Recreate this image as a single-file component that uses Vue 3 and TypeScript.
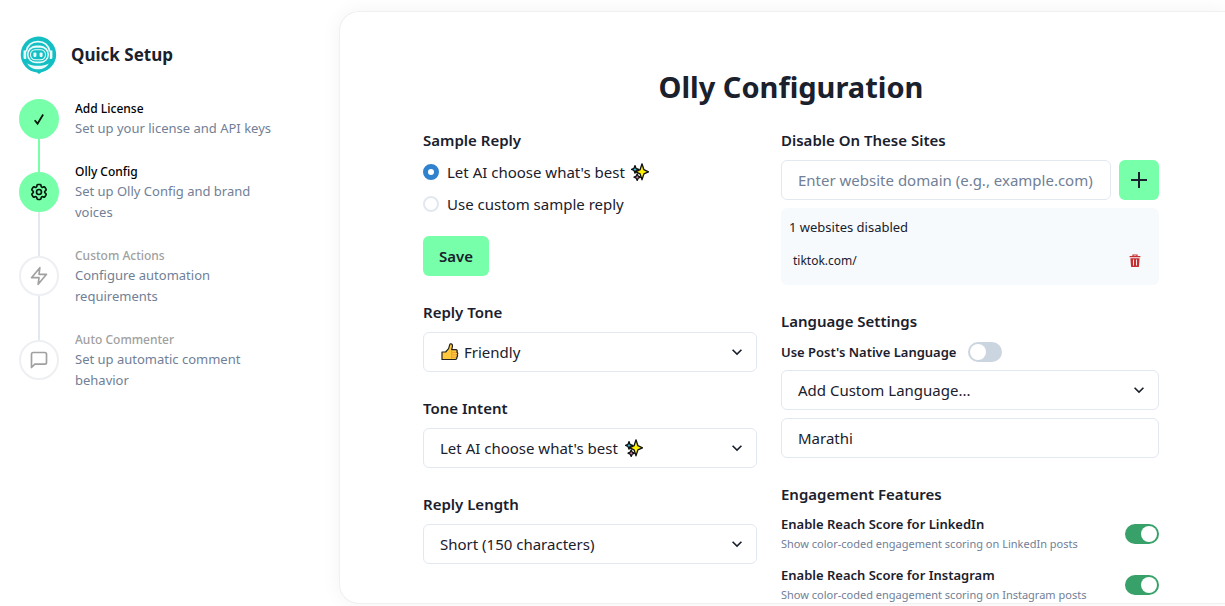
<script setup lang="ts">
import { ref } from 'vue'

interface Step {
  title: string
  text: string
  state: 'done' | 'active' | 'todo'
  icon: 'check' | 'gear' | 'bolt' | 'chat'
}

interface Feature {
  id: string
  title: string
  text: string
  on: boolean
}

const steps: Step[] = [
  { title: 'Add License', text: 'Set up your license and API keys', state: 'done', icon: 'check' },
  { title: 'Olly Config', text: 'Set up Olly Config and brand voices', state: 'active', icon: 'gear' },
  { title: 'Custom Actions', text: 'Configure automation requirements', state: 'todo', icon: 'bolt' },
  { title: 'Auto Commenter', text: 'Set up automatic comment behavior', state: 'todo', icon: 'chat' },
]

const replyMode = ref('ai')
const domain = ref('')
const sites = ref<string[]>(['tiktok.com/'])
const nativeLanguage = ref(false)
const customLanguage = ref('Marathi')
const features = ref<Feature[]>([
  { id: 'linkedin', title: 'Enable Reach Score for LinkedIn', text: 'Show color-coded engagement scoring on LinkedIn posts', on: true },
  { id: 'instagram', title: 'Enable Reach Score for Instagram', text: 'Show color-coded engagement scoring on Instagram posts', on: true },
])

function addSite(): void {
  const value = domain.value.trim()
  if (value) sites.value.push(value)
  domain.value = ''
}

function removeSite(index: number): void {
  sites.value.splice(index, 1)
}
</script>

<template>
  <div class="page">
    <svg width="0" height="0" class="defs" aria-hidden="true">
      <symbol id="sparkles" viewBox="0 0 18 18">
        <g stroke="#111" stroke-width="1.3" stroke-linejoin="round">
          <path d="M4 2.6 5 5.3 7.6 6.4 5 7.5 4 10.2 3 7.5.6 6.4 3 5.3Z" fill="#3fc1d6" />
          <path d="M6.2 10.800 7.200 13.200 9.600 14.200 7.200 15.200 6.200 17.400 5.200 15.200 3 14.200 5.200 13.200Z" fill="#e78bc0" />
          <path d="M11 .8 12.900 6.700 17.500 8.800 12.900 10.900 11 16.800 9.100 10.900 4.800 8.800 9.100 6.700Z" fill="#fff100" />
        </g>
      </symbol>
      <symbol id="thumb" viewBox="0 0 18 18">
        <path d="M1 9h3.6L7.6 5.6 8.8 1.4c.3-.9 2.6-.7 2.7 1.2 0 1.6-.5 2.9-.9 4.1h4.2c1.6 0 1.9 1.7.9 2.4 1.3.4 1.4 2.1.3 2.6 1 .7.7 2-.3 2.3.6.9 0 2.5-1.5 2.5H1Z" fill="#ffc83d" stroke="#222" stroke-width="1.2" stroke-linejoin="round" />
        <path d="M10.6 7.2v8.4M11 9.4h4.4M11 11.8h4.6M11 14.2h4" fill="none" stroke="#e8912d" stroke-width=".7" />
      </symbol>
      <symbol id="chevron" viewBox="0 0 24 24">
        <path d="M16.59 8.59 12 13.17 7.41 8.59 6 10l6 6 6-6z" fill="currentColor" />
      </symbol>
    </svg>

    <aside class="sidebar">
      <header class="brand">
        <svg class="logo" viewBox="0 0 38 38" aria-hidden="true">
          <path d="M19 .5a18 18 0 0 1 3.4 35.7L20 38l-2-1.6A18 18 0 0 1 19 .5Z" fill="#14bfc4" />
          <path d="M7.2 15.5C8.6 9 13.3 5.6 19 5.6S29.400 9 30.800 15.500" fill="none" stroke="#e9fbfa" stroke-width="1.800" />
          <path d="M4.600 14.500h2.600v8.500H6a1.500 1.500 0 0 1-1.500-1.500ZM30.800 14.500h2.600v7a1.500 1.500 0 0 1-1.500 1.500h-1.100Z" fill="#e9fbfa" />
          <rect x="8" y="9.600" width="22" height="17.600" rx="8.800" fill="#e9fbfa" />
          <rect x="9.500" y="11.800" width="19" height="13.800" rx="6.900" fill="#14bfc4" />
          <rect x="11" y="13.200" width="16" height="11" rx="5.200" fill="#e9fbfa" />
          <rect x="12" y="14.200" width="14" height="9" rx="4.200" fill="#14bfc4" />
          <rect x="14.400" y="16.400" width="3" height="4.600" rx="1.200" fill="#e9fbfa" />
          <rect x="20.600" y="16.400" width="3" height="4.600" rx="1.200" fill="#e9fbfa" />
          <path d="M8.200 27.400c2.600 1.700 6.400 2.400 10.800 2.400s8.200-.7 10.800-2.400C27.800 31.200 23.800 33.200 19 33.200S10.200 31.200 8.200 27.400Z" fill="#e9fbfa" />
        </svg>
        <h2>Quick Setup</h2>
      </header>

      <ol class="steps">
        <li v-for="step in steps" :key="step.title" class="step" :class="step.state">
          <span class="dot">
            <svg v-if="step.icon === 'check'" class="check" viewBox="0 0 20 20" aria-hidden="true">
              <path d="M5.200 11.400 8.400 15.200 14.600 5" fill="none" stroke="currentColor" stroke-width="2" />
            </svg>
            <svg v-else viewBox="0 0 24 24" fill="none" stroke="currentColor" stroke-width="2" stroke-linecap="round" stroke-linejoin="round" aria-hidden="true">
              <template v-if="step.icon === 'gear'">
                <path d="M9.594 3.940c.09-.542.560-.940 1.110-.940h2.593c.550 0 1.020.398 1.110.940l.213 1.281c.063.374.313.686.645.870.074.040.147.083.220.127.325.196.720.257 1.075.124l1.217-.456a1.125 1.125 0 0 1 1.370.490l1.296 2.247a1.125 1.125 0 0 1-.260 1.431l-1.003.827c-.293.241-.438.613-.430.992a7.723 7.723 0 0 1 0 .255c-.008.378.137.750.430.991l1.004.827c.424.350.534.955.260 1.430l-1.298 2.247a1.125 1.125 0 0 1-1.369.491l-1.217-.456c-.355-.133-.750-.072-1.076.124a6.470 6.470 0 0 1-.220.128c-.331.183-.581.495-.644.869l-.213 1.281c-.090.543-.560.940-1.110.940h-2.594c-.550 0-1.019-.398-1.110-.940l-.213-1.281c-.062-.374-.312-.686-.644-.870a6.520 6.520 0 0 1-.220-.127c-.325-.196-.720-.257-1.076-.124l-1.217.456a1.125 1.125 0 0 1-1.369-.490l-1.297-2.247a1.125 1.125 0 0 1 .260-1.431l1.004-.827c.292-.240.437-.613.430-.991a6.932 6.932 0 0 1 0-.255c.007-.380-.138-.751-.430-.992l-1.004-.827a1.125 1.125 0 0 1-.260-1.430l1.297-2.247a1.125 1.125 0 0 1 1.370-.491l1.216.456c.356.133.751.072 1.076-.124.072-.044.146-.086.220-.128.332-.183.582-.495.644-.869z" />
                <circle cx="12" cy="12" r="3" />
              </template>
              <path v-else-if="step.icon === 'bolt'" d="M13 2 3 14h9l-1 8 10-12h-9z" />
              <path v-else d="M21 15a2 2 0 0 1-2 2H7l-4 4V5a2 2 0 0 1 2-2h14a2 2 0 0 1 2 2z" />
            </svg>
          </span>
          <div class="step-body">
            <h3>{{ step.title }}</h3>
            <p>{{ step.text }}</p>
          </div>
        </li>
      </ol>
    </aside>

    <main class="panel">
      <h1>Olly Configuration</h1>
      <div class="columns">
        <div class="column">
          <section role="radiogroup" aria-labelledby="sample-title">
            <h2 id="sample-title" class="label">Sample Reply</h2>
            <div class="radios">
              <label class="radio">
                <input v-model="replyMode" type="radio" name="reply" value="ai" />
                <span>Let AI choose what's best</span>
                <svg class="emoji" aria-hidden="true"><use href="#sparkles" /></svg>
              </label>
              <label class="radio">
                <input v-model="replyMode" type="radio" name="reply" value="custom" />
                <span>Use custom sample reply</span>
              </label>
            </div>
            <button type="button" class="save">Save</button>
          </section>

          <section>
            <label class="label" for="tone">Reply Tone</label>
            <div class="select with-icon">
              <select id="tone"><option>Friendly</option></select>
              <svg class="emoji leading" aria-hidden="true"><use href="#thumb" /></svg>
              <svg class="chevron" aria-hidden="true"><use href="#chevron" /></svg>
            </div>
          </section>

          <section>
            <label class="label" for="intent">Tone Intent</label>
            <div class="select">
              <select id="intent"><option>Let AI choose what's best</option></select>
              <svg class="emoji trailing" aria-hidden="true"><use href="#sparkles" /></svg>
              <svg class="chevron" aria-hidden="true"><use href="#chevron" /></svg>
            </div>
          </section>

          <section>
            <label class="label" for="length">Reply Length</label>
            <div class="select">
              <select id="length"><option>Short (150 characters)</option></select>
              <svg class="chevron" aria-hidden="true"><use href="#chevron" /></svg>
            </div>
          </section>
        </div>

        <div class="column">
          <section>
            <label class="label" for="domain">Disable On These Sites</label>
            <form class="add" @submit.prevent="addSite">
              <input id="domain" v-model="domain" class="field" type="text" placeholder="Enter website domain (e.g., example.com)" />
              <button type="submit" class="plus" aria-label="Add website">
                <svg viewBox="0 0 20 20" aria-hidden="true">
                  <path d="M10 2v16M2 10h16" fill="none" stroke="currentColor" stroke-width="2" />
                </svg>
              </button>
            </form>
            <div class="sites">
              <p>{{ sites.length }} websites disabled</p>
              <ul>
                <li v-for="(site, index) in sites" :key="site">
                  <span>{{ site }}</span>
                  <button type="button" :aria-label="`Remove ${site}`" @click="removeSite(index)">
                    <svg viewBox="0 0 12 14" aria-hidden="true">
                      <path d="M.6 2.600h10.800M4 2.400V1h4v1.400" fill="none" stroke="currentColor" stroke-width="1.200" />
                      <path fill-rule="evenodd" d="M1.400 4.200h9.200l-.6 8a1 1 0 0 1-1 .9H3a1 1 0 0 1-1-.9ZM4 5.600v6h.9v-6ZM7.100 5.600v6H8v-6Z" fill="currentColor" />
                    </svg>
                  </button>
                </li>
              </ul>
            </div>
          </section>

          <section>
            <h2 class="label">Language Settings</h2>
            <div class="native">
              <label for="native" class="name">Use Post's Native Language</label>
              <input id="native" v-model="nativeLanguage" class="switch" type="checkbox" role="switch" />
            </div>
            <div class="select">
              <select aria-label="Custom language"><option>Add Custom Language...</option></select>
              <svg class="chevron" aria-hidden="true"><use href="#chevron" /></svg>
            </div>
            <input v-model="customLanguage" class="field language" type="text" aria-label="Language name" />
          </section>

          <section>
            <h2 class="label">Engagement Features</h2>
            <div class="features">
              <div v-for="feature in features" :key="feature.id" class="feature">
                <div>
                  <label :for="feature.id" class="name">{{ feature.title }}</label>
                  <p>{{ feature.text }}</p>
                </div>
                <input :id="feature.id" v-model="feature.on" class="switch" type="checkbox" role="switch" />
              </div>
            </div>
          </section>
        </div>
      </div>
    </main>
  </div>
</template>

<style>
body {
  margin: 0;
  background: #fff;
}
</style>

<style scoped>
.page {
  --green: #78ffaa;
  --line: #e2e8f0;
  --muted: #718096;
  box-sizing: border-box;
  display: flex;
  height: 100vh;
  padding: 11px 0 2px;
  overflow: hidden;
  font-family: "Noto Sans", "Open Sans", sans-serif;
  font-size: 15px;
  line-height: 24px;
  color: #1a202c;
}

.page * {
  box-sizing: border-box;
}

.defs {
  position: absolute;
}

h1,
h2,
h3,
p,
ol,
ul {
  margin: 0;
  padding: 0;
}

ol,
ul {
  list-style: none;
}

button,
input,
select {
  margin: 0;
  font: inherit;
  color: inherit;
}

button {
  border: 0;
  cursor: pointer;
}

svg {
  display: block;
  flex-shrink: 0;
}

.sidebar {
  flex: 0 0 339px;
  padding: 25px 60px 0 19px;
}

.brand {
  display: flex;
  align-items: center;
  gap: 14px;
  margin-bottom: 24px;
}

.logo {
  width: 38px;
  height: 38px;
}

.brand h2 {
  font-size: 17px;
  font-weight: 700;
}

.steps {
  display: flex;
  flex-direction: column;
  gap: 22px;
}

.step {
  position: relative;
  display: flex;
  align-items: center;
  gap: 16px;
}

.step:not(:last-child)::before {
  content: "";
  position: absolute;
  top: 50%;
  left: 19px;
  width: 2px;
  height: calc(100% + 22px);
  background: var(--line);
}

.step.done::before {
  background: var(--green);
}

.dot {
  position: relative;
  z-index: 1;
  display: grid;
  place-items: center;
  flex: 0 0 40px;
  height: 40px;
  border: 2px solid #edeff2;
  border-radius: 50%;
  background: #fff;
  color: #a0a0a0;
}

.done .dot,
.active .dot {
  border-color: var(--green);
  background: var(--green);
  color: #06170d;
}

.dot svg {
  width: 20px;
  height: 20px;
}

.dot .check {
  width: 18px;
  height: 18px;
}

.step-body {
  padding-top: 2px;
}

.step h3 {
  font-size: 12px;
  line-height: 18px;
  font-weight: 500;
  color: #000;
}

.step.todo h3 {
  color: #a0a0a0;
}

.step p {
  max-width: 184px;
  font-size: 13px;
  line-height: 21px;
  color: var(--muted);
}

.step.done p {
  max-width: none;
}

.panel {
  flex: 1;
  min-width: 0;
  padding: 56px 66px 0 83px;
  border: 1px solid #f0f0f0;
  border-right: 0;
  border-radius: 20px 0 0 20px;
  background: #fff;
  box-shadow: 0 0 20px rgba(0, 0, 0, 0.05);
  overflow: hidden;
}

h1 {
  margin-bottom: 22px;
  font-size: 29px;
  line-height: 38px;
  font-weight: 700;
  text-align: center;
}

.columns {
  display: grid;
  grid-template-columns: 334fr 378fr;
  gap: 24px;
}

.column {
  display: flex;
  flex-direction: column;
  gap: 24px;
  min-width: 0;
}

.label {
  display: block;
  margin-bottom: 8px;
  font-size: 15px;
  line-height: 24px;
  font-weight: 600;
}

.radios {
  display: flex;
  flex-direction: column;
  gap: 8px;
  margin-bottom: 20px;
}

.radio {
  display: flex;
  align-items: center;
}

.radio span {
  margin: 0 6px 0 8px;
}

.radio input {
  appearance: none;
  width: 16px;
  height: 16px;
  border: 2px solid var(--line);
  border-radius: 50%;
  background: #fff;
}

.radio input:checked {
  border: 5px solid #3182ce;
}

.emoji {
  width: 18px;
  height: 18px;
}

.save {
  height: 40px;
  padding: 0 16px;
  border-radius: 6px;
  background: var(--green);
  font-weight: 600;
}

.select {
  position: relative;
}

.select select,
.field {
  display: block;
  width: 100%;
  height: 40px;
  padding: 0 16px;
  border: 1px solid var(--line);
  border-radius: 6px;
  background: #fff;
}

.select select {
  appearance: none;
  padding-right: 32px;
}

.with-icon select {
  padding-left: 40px;
}

.leading,
.trailing,
.chevron {
  position: absolute;
  top: 11px;
  pointer-events: none;
}

.leading {
  left: 18px;
}

.trailing {
  left: 202px;
}

.chevron {
  top: 10px;
  right: 10px;
  width: 20px;
  height: 20px;
}

.add {
  display: flex;
  gap: 8px;
}

.field::placeholder {
  color: var(--muted);
  opacity: 1;
}

.add .field {
  flex: 1;
  min-width: 0;
}

.plus {
  display: grid;
  place-items: center;
  width: 40px;
  height: 40px;
  padding: 0;
  border-radius: 6px;
  background: var(--green);
}

.plus svg {
  width: 20px;
  height: 20px;
}

.sites {
  margin-top: 8px;
  padding: 8px 8px 12px;
  border-radius: 6px;
  background: #f7fafc;
}

.sites p {
  margin-bottom: 11px;
  font-size: 13px;
  line-height: 22px;
}

.sites li {
  display: flex;
  align-items: center;
  justify-content: space-between;
  padding: 0 4px;
  font-size: 12px;
}

.sites button {
  display: grid;
  place-items: center;
  width: 24px;
  height: 24px;
  padding: 0;
  background: none;
  color: #c53030;
}

.sites svg {
  width: 12px;
  height: 14px;
}

.native {
  display: flex;
  align-items: center;
  gap: 12px;
  height: 22px;
  margin-bottom: 7px;
}

.name {
  display: block;
  font-size: 13px;
  line-height: 21px;
  font-weight: 600;
}

.switch {
  appearance: none;
  flex-shrink: 0;
  width: 34px;
  height: 20px;
  padding: 2px;
  border-radius: 10px;
  background: #cbd5e0;
}

.switch::before {
  content: "";
  display: block;
  width: 16px;
  height: 16px;
  border-radius: 50%;
  background: #fff;
}

.switch:checked {
  background: #38a169;
}

.switch:checked::before {
  margin-left: auto;
}

.language {
  margin-top: 8px;
}

.features {
  display: flex;
  flex-direction: column;
  gap: 12px;
}

.feature {
  display: flex;
  align-items: center;
  justify-content: space-between;
}

.feature p {
  font-size: 11px;
  line-height: 18px;
  color: var(--muted);
}
</style>
